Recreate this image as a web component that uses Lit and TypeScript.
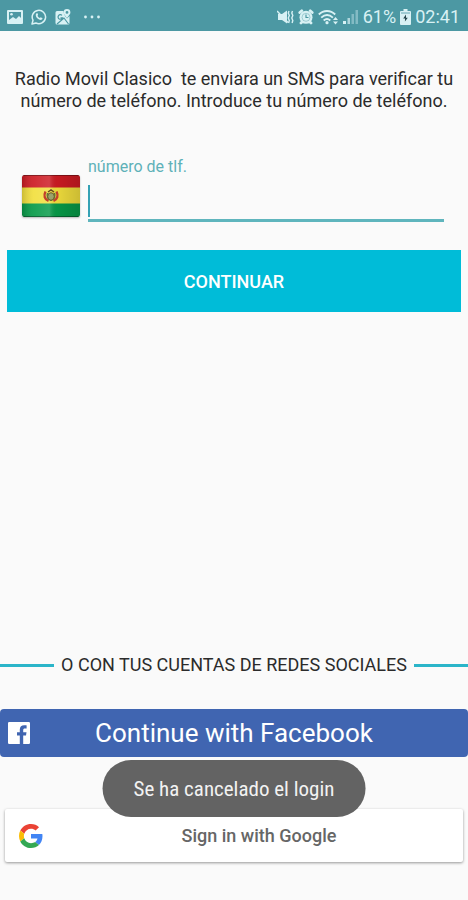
import { LitElement, html, css, svg } from "lit";
import { customElement } from "lit/decorators.js";

const photoIcon = svg`<svg class="icon" width="16" height="16" viewBox="0 0 16 16" aria-hidden="true">
  <path fill="currentColor" fill-rule="evenodd" d="M1 1h14a1 1 0 0 1 1 1v12a1 1 0 0 1-1 1H1a1 1 0 0 1-1-1V2a1 1 0 0 1 1-1zM2 3v8l4-3 3 2 3-3 2 2V3z"/>
  <circle cx="4.5" cy="5.2" r="1.3" fill="currentColor"/>
</svg>`;

const chatIcon = svg`<svg class="icon" width="16" height="16" viewBox="0 0 16 16" aria-hidden="true">
  <path fill="none" stroke="currentColor" stroke-width="1.5" stroke-linejoin="round" d="M1 15l1-3.8A6.7 6.7 0 1 1 4.900 14z"/>
  <path fill="currentColor" d="M5.700 4.200c.5-.3.8 0 1 .5l.4 1c.1.400-.4.700-.6 1 .5 1.100 1.300 1.900 2.400 2.400.4-.3.700-.9 1.100-.7l1.300.7c.4.300 0 1.200-.4 1.500-1.200.8-2.900.3-4.300-1-1.700-1.500-2.600-4.300-.9-5.400z"/>
</svg>`;

const mapIcon = svg`<svg class="icon" width="16" height="16" viewBox="0 0 16 16" aria-hidden="true">
  <path fill="currentColor" d="M2 2h6.500c0 3 1.500 5 3.500 7.500L14.500 7v7a1.500 1.500 0 0 1-1.500 1.500H2A1.500 1.500 0 0 1 .5 14V3.500A1.500 1.500 0 0 1 2 2z"/>
  <path fill="none" stroke="#4c98a3" stroke-width="1.200" d="M7 6.300a2.300 2.300 0 1 0 .5 2.500H5.500M2 15l7-6 4.500 6"/>
  <path fill="currentColor" fill-rule="evenodd" d="M12 0a3.400 3.400 0 0 1 3.400 3.400C15.400 5.600 13 6.500 12 9.500 11 6.500 8.600 5.600 8.600 3.400A3.400 3.400 0 0 1 12 0zm0 2a1.400 1.400 0 1 0 0 2.800A1.400 1.400 0 0 0 12 2z"/>
</svg>`;

const dotsIcon = svg`<svg class="icon" width="18" height="16" viewBox="0 0 18 16" aria-hidden="true">
  <g fill="currentColor"><circle cx="2.500" cy="8" r="1.400"/><circle cx="9" cy="8" r="1.400"/><circle cx="15.500" cy="8" r="1.400"/></g>
</svg>`;

const muteIcon = svg`<svg class="icon" width="17" height="16" viewBox="0 0 17 16" aria-hidden="true">
  <path fill="currentColor" d="M1 5h4l5-3.500v13L5 11H1z"/>
  <path stroke="currentColor" stroke-width="1.500" d="M0 2l11 11.500"/>
  <path fill="none" stroke="currentColor" stroke-width="1.400" d="M12 2l-.7 2 1 2.500-1 2.500 1 2.500-.7 2.500M15.500 2l-.7 2 1 2.500-1 2.500 1 2.500-.7 2.500"/>
</svg>`;

const alarmIcon = svg`<svg class="icon" width="16" height="16" viewBox="0 0 16 16" aria-hidden="true">
  <path stroke="currentColor" stroke-width="2.800" stroke-linecap="round" d="M1.800 3.500l2-1.700M14.200 3.500l-2-1.700M3 14l2-2M13 14l-2-2"/>
  <circle cx="8" cy="8.300" r="6.500" fill="currentColor"/>
  <circle cx="8" cy="8.300" r="4" fill="none" stroke="#4c98a3" stroke-opacity=".6" stroke-width=".7"/>
  <path fill="none" stroke="#4c98a3" stroke-width="1.200" d="M8 5.500v3h2.500"/>
</svg>`;

const wifiIcon = svg`<svg class="icon" width="21" height="16" viewBox="0 0 21 16" aria-hidden="true">
  <g fill="none" stroke="currentColor" stroke-width="1.900">
    <path d="M.8 5.500c4.700-4.700 11.700-4.700 16.400 0"/><path d="M3.200 8.600c3.700-3.400 8-3.400 11.700 0"/><path d="M5.700 11.500c2.200-2 4.400-2 6.600 0"/>
  </g>
  <circle cx="9" cy="13.700" r="1.600" fill="currentColor"/>
  <path fill="currentColor" d="M15 11h5l-2.500-3zM15 12.500h5L17.500 15.500z"/>
</svg>`;

const signalIcon = svg`<svg class="icon" width="16" height="16" viewBox="0 0 16 16" aria-hidden="true">
  <path fill="currentColor" d="M0 12h3v3H0z"/><path fill="currentColor" opacity=".7" d="M4.500 9h2.500v6H4.500z"/>
  <path fill="currentColor" opacity=".4" d="M8.500 5H11v10H8.500zM12.500 1H15v14h-2.500z"/>
</svg>`;

const batteryIcon = svg`<svg class="icon" width="11" height="16" viewBox="0 0 11 16" aria-hidden="true">
  <path fill="currentColor" d="M3.500 0h4v2H10a1 1 0 0 1 1 1v12a1 1 0 0 1-1 1H1a1 1 0 0 1-1-1V3a1 1 0 0 1 1-1h2.500z"/>
  <path stroke="#4c98a3" stroke-width=".8" d="M1 4h9"/>
  <path fill="#24464c" d="M6 5.500L3.200 9.500h1.900L4.900 12.500 7.800 8.700H6z"/>
</svg>`;

const flag = svg`<svg class="flag" width="58" height="42" viewBox="0 0 58 42" role="img" aria-label="Bolivia">
  <defs>
    <clipPath id="rounded"><rect width="58" height="42" rx="2"/></clipPath>
    <linearGradient id="sheen" x2="1"><stop offset="0" stop-color="#000" stop-opacity=".16"/><stop offset=".2" stop-color="#fff" stop-opacity=".08"/><stop offset=".47" stop-color="#fff" stop-opacity=".16"/><stop offset=".6" stop-color="#000" stop-opacity=".04"/><stop offset="1" stop-color="#000" stop-opacity=".16"/></linearGradient>
  </defs>
  <g clip-path="url(#rounded)">
    <path fill="#cd1b23" d="M0 0h58v13H0z"/><path fill="#f2df3d" d="M0 12.500h58V29H0z"/><path fill="#079a48" d="M0 28.500h58V42H0z"/>
    <path fill="url(#sheen)" d="M0 0h58v42H0z"/>
    <path fill="none" stroke="#000" stroke-opacity=".35" d="M0 .5h58M0 41.500h58"/>
  </g>
  <path fill="none" stroke="#c2402b" stroke-width="2.400" d="M23.500 16.500c-2 4-1 8 3 9.500M34.500 16.500c2 4 1 8-3 9.500"/>
  <path fill="none" stroke="#52743b" stroke-width="1.300" d="M25.500 18c-1 3 0 6 3.500 7.500 3.500-1.500 4.500-4.500 3.500-7.500"/>
  <ellipse cx="29" cy="21.500" rx="3.300" ry="3.800" fill="#9aa36b" stroke="#6f5a26"/>
  <path fill="none" stroke="#65491f" stroke-width="1.500" d="M26 17l3-2 3 2"/>
</svg>`;

const facebookIcon = svg`<svg class="facebook-logo" width="22" height="22" viewBox="0 0 22 22" aria-hidden="true">
  <path fill="#fff" d="M1.200 0h19.600A1.200 1.200 0 0 1 22 1.200v19.600a1.200 1.200 0 0 1-1.200 1.200h-5.600v-8.500H18l.5-3.300h-3.300V8c0-1 .4-1.600 1.700-1.600h1.700v-3c-.3 0-1.300-.1-2.500-.1-2.600 0-4.300 1.500-4.300 4.300v2.600H9v3.300h2.800V22H1.200A1.200 1.200 0 0 1 0 20.800V1.200A1.200 1.200 0 0 1 1.200 0z"/>
</svg>`;

const googleIcon = svg`<svg class="google-logo" width="24" height="24" viewBox="0 0 48 48" aria-hidden="true">
  <path fill="#ea4335" d="M24 9.500c3.540 0 6.710 1.220 9.210 3.600l6.850-6.850C35.900 2.380 30.470 0 24 0 14.620 0 6.510 5.380 2.560 13.220l7.980 6.190C12.430 13.720 17.740 9.500 24 9.500z"/>
  <path fill="#4285f4" d="M46.980 24.550c0-1.570-.15-3.090-.38-4.550H24v9.020h12.940c-.58 2.960-2.260 5.480-4.780 7.180l7.730 6c4.510-4.180 7.090-10.360 7.090-17.650z"/>
  <path fill="#fbbc05" d="M10.530 28.590c-.48-1.450-.76-2.990-.76-4.590s.27-3.140.76-4.590l-7.980-6.190C.92 16.460 0 20.120 0 24c0 3.880.92 7.540 2.560 10.780l7.970-6.190z"/>
  <path fill="#34a853" d="M24 48c6.480 0 11.930-2.130 15.890-5.810l-7.730-6c-2.150 1.450-4.920 2.300-8.160 2.300-6.260 0-11.570-4.220-13.470-9.910l-7.980 6.190C6.510 42.620 14.620 48 24 48z"/>
</svg>`;

@customElement("app-root")
export class AppRoot extends LitElement {
  static styles = css`
    :host {
      display: flex;
      flex-direction: column;
      box-sizing: border-box;
      min-height: 100vh;
      background: #fafafa;
      color: #2b2b2b;
      font-family: Roboto, "Liberation Sans", sans-serif;
    }
    button, input { font-family: inherit; box-sizing: border-box; }
    .icon { flex: none; display: block; }
    .status {
      display: flex;
      align-items: center;
      justify-content: space-between;
      height: 31px;
      padding: 2px 8px 0 7px;
      box-sizing: border-box;
      background: #4c98a3;
      color: #d8f1f4;
      font-size: 18px;
      line-height: 22px;
    }
    .notices { display: flex; align-items: center; gap: 8px; }
    .notices .icon:last-child { margin-left: 4px; }
    .system { display: flex; align-items: center; gap: 4px; }
    .intro {
      margin: 0;
      padding: 37px 8px 0;
      text-align: center;
      font-size: 18px;
      line-height: 22px;
      white-space: pre-wrap;
    }
    .phone {
      display: flex;
      align-items: flex-end;
      gap: 8px;
      margin: 45px 24px 0 22px;
    }
    .flag { display: block; flex: none; margin-bottom: 5px; border-radius: 2px; box-shadow: 0 1px 2px #0004; }
    .field { position: relative; flex: 1; display: flex; flex-direction: column; }
    .label { color: #5eb1b8; font-size: 16px; line-height: 20px; }
    .number {
      width: 100%;
      height: 45px;
      padding: 0 4px;
      border: 0;
      border-bottom: 3px solid #5fb5bd;
      border-radius: 0;
      outline: 0;
      background: transparent;
      color: #2b2b2b;
      font-size: 24px;
    }
    .caret { position: absolute; left: 0; bottom: 5px; width: 2px; height: 32px; background: #35a2b5; }
    .continue {
      height: 62px;
      margin: 28px 7px 0;
      border: 0;
      background: #00bcd8;
      color: #fff;
      font-size: 18px;
      font-weight: 500;
    }
    .social { margin-top: auto; padding-bottom: 38px; display: flex; flex-direction: column; }
    .divider { display: flex; align-items: center; gap: 7px; font-size: 18px; line-height: 22px; white-space: nowrap; }
    .divider::before, .divider::after { content: ""; flex: 1; height: 3px; background: #2bb5c9; }
    .facebook, .google { display: flex; align-items: center; border: 0; }
    .facebook {
      height: 48px;
      margin-top: 33px;
      padding: 0 8px;
      border-radius: 4px;
      background: #4065b1;
      color: #fff;
      font-size: 26px;
    }
    .facebook .caption { flex: 1; padding-right: 22px; }
    .google {
      height: 53px;
      margin: 52px 5px 0;
      padding: 0 14px;
      border-radius: 2px;
      background: #fff;
      box-shadow: 0 1px 3px #0006;
      color: #666;
      font-size: 18px;
      font-weight: 500;
    }
    .google .caption { flex: 1; padding-left: 26px; }
    .toast {
      position: fixed;
      left: 50%;
      bottom: 83px;
      transform: translateX(-50%);
      box-sizing: border-box;
      height: 57px;
      padding: 0 31px;
      border-radius: 29px;
      background: #636363;
      color: #f2f2f2;
      font-family: "Roboto Condensed", Roboto, sans-serif;
      font-size: 21px;
      line-height: 58px;
      white-space: nowrap;
    }
  `;

  render() {
    return html`
      <header class="status">
        <div class="notices">${photoIcon}${chatIcon}${mapIcon}${dotsIcon}</div>
        <div class="system">
          ${muteIcon}${alarmIcon}${wifiIcon}${signalIcon}
          <span>61%</span>${batteryIcon}<time>02:41</time>
        </div>
      </header>
      <p class="intro">Radio Movil Clasico  te enviara un SMS para verificar tu número de teléfono. Introduce tu número de teléfono.</p>
      <div class="phone">
        ${flag}
        <div class="field">
          <label class="label" for="phone">número de tlf.</label>
          <input class="number" id="phone" type="tel" />
          <span class="caret"></span>
        </div>
      </div>
      <button class="continue" type="button">CONTINUAR</button>
      <section class="social">
        <div class="divider">O CON TUS CUENTAS DE REDES SOCIALES</div>
        <button class="facebook" type="button">${facebookIcon}<span class="caption">Continue with Facebook</span></button>
        <button class="google" type="button">${googleIcon}<span class="caption">Sign in with Google</span></button>
      </section>
      <div class="toast" role="status">Se ha cancelado el login</div>
    `;
  }
}
